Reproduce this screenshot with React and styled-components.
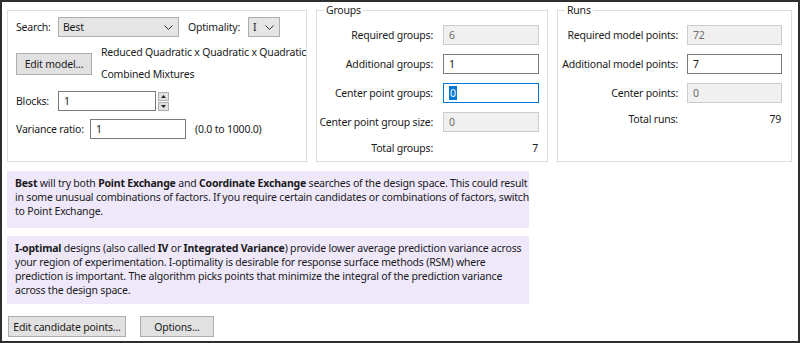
import React from 'react';
import styled, { createGlobalStyle } from 'styled-components';

const Global = createGlobalStyle`
  html, body { margin: 0; padding: 0; background: #fff; }
  * { box-sizing: border-box; }
`;

const FONT = `"Noto Sans", "Open Sans", sans-serif`;

const Frame = styled.div`
  width: 800px;
  height: 343px;
  border: 2px solid #2e2e2e;
  padding: 8px 7px 0 5px;
  font-family: ${FONT};
  font-size: 10.5px;
  letter-spacing: -0.2px;
  color: #1a1a1a;
  background: #fff;
  overflow: hidden;
`;

const TopRow = styled.div`
  display: grid;
  grid-template-columns: 300px 232px 235px;
  column-gap: 9px;
`;

const Panel = styled.div`
  position: relative;
  height: 152px;
  border: 1px solid #dcdcdc;
  box-shadow: inset 1px 1px 0 #fff, 1px 1px 0 #fff;
  padding: ${p => p.$pad || '14px 0 0 0'};
`;

const Caption = styled.span`
  position: absolute;
  top: -9px;
  left: 7px;
  padding: 0 2px;
  background: #fff;
  line-height: 16px;
`;

const Row = styled.div`
  display: flex;
  align-items: ${p => p.$align || 'center'};
  margin-top: ${p => p.$mt || 0}px;
`;

const Label = styled.span`
  width: ${p => p.$w}px;
  margin-left: ${p => p.$ml || 0}px;
  flex-shrink: 0;
  white-space: nowrap;
`;

const Select = styled.div`
  width: ${p => p.$w}px;
  height: 20px;
  border: 1px solid #adadad;
  background: #e5e5e5;
  display: flex;
  align-items: center;
  justify-content: space-between;
  padding: 0 5px 0 4px;
  svg { display: block; }
`;

const Button = styled.div`
  width: ${p => p.$w}px;
  height: ${p => p.$h || 21}px;
  margin-top: ${p => p.$mt || 0}px;
  margin-left: ${p => p.$ml || 0}px;
  border: 1px solid #adadad;
  background: #e1e1e1;
  display: flex;
  align-items: center;
  justify-content: center;
  white-space: nowrap;
  flex-shrink: 0;
`;

const ModelText = styled.div`
  margin-left: 9px;
  line-height: 22px;
  white-space: nowrap;
`;

const Input = styled.div`
  width: ${p => p.$w || 96}px;
  height: 20px;
  border: 1px solid ${p => (p.$focus ? '#0078d7' : p.$disabled ? '#cccccc' : '#7a7a7a')};
  background: ${p => (p.$disabled ? '#f0f0f0' : '#fff')};
  color: ${p => (p.$disabled ? '#6d6d6d' : '#1a1a1a')};
  display: flex;
  align-items: center;
  padding-left: 5px;
  flex-shrink: 0;
`;

const Selected = styled.span`
  background: #0078d7;
  color: #fff;
  line-height: 14px;
  padding: 0 1px;
`;

const Spin = styled.div`
  display: flex;
  flex-direction: column;
  gap: 1px;
  margin-left: 2px;
`;

const SpinBtn = styled.div`
  width: 11px;
  height: 9px;
  border: 1px solid #adadad;
  background: #e1e1e1;
  display: flex;
  align-items: center;
  justify-content: center;
  svg { display: block; }
`;

const Note = styled.span`
  margin-left: 9px;
  white-space: nowrap;
`;

const FieldGrid = styled.div`
  display: grid;
  grid-template-columns: ${p => p.$label}px ${p => p.$input}px;
  column-gap: ${p => p.$gap}px;
  grid-auto-rows: 20px;
  row-gap: 9px;
  align-items: center;
`;

const FieldLabel = styled.span`
  text-align: right;
  white-space: nowrap;
`;

const TotalLabel = styled(FieldLabel)`
  align-self: start;
  line-height: 14px;
`;

const TotalValue = styled.span`
  text-align: right;
  padding-right: 1px;
  align-self: start;
  line-height: 14px;
`;

const Info = styled.div`
  width: 522px;
  height: ${p => p.$h}px;
  margin-top: ${p => p.$mt}px;
  background: #eee8fa;
  padding: 5px 8px;
  line-height: 14px;
  white-space: nowrap;
  b { font-weight: 700; }
`;

const Footer = styled.div`
  display: flex;
  margin-top: 12px;
`;

const Chevron = () => (
  <svg width="9" height="5" viewBox="0 0 9 5">
    <path d="M0.5 0.5 L4.5 4.5 L8.5 0.5" fill="none" stroke="#333" strokeWidth="1" />
  </svg>
);

const Arrow = ({ down }) => (
  <svg width="5" height="3" viewBox="0 0 5 3">
    <path d={down ? 'M0 0 H5 L2.5 3 Z' : 'M0 3 H5 L2.5 0 Z'} fill="#222" />
  </svg>
);

function TotalRow({ label, value }) {
  return (
    <>
      <TotalLabel>{label}</TotalLabel>
      <TotalValue>{value}</TotalValue>
    </>
  );
}

export default function App() {
  return (
    <Frame>
      <Global />
      <TopRow>
        <Panel $pad="6px 0 0 8px">
          <Row>
            <Label $w={42}>Search:</Label>
            <Select $w={121}>
              <span>Best</span>
              <Chevron />
            </Select>
            <Label $w={60} $ml={9}>Optimality:</Label>
            <Select $w={32}>
              <span>I</span>
              <Chevron />
            </Select>
          </Row>
          <Row $align="flex-start" $mt={4}>
            <Button $w={76} $h={22} $mt={12}>Edit model...</Button>
            <ModelText>
              Reduced Quadratic x Quadratic x Quadratic
              <br />
              Combined Mixtures
            </ModelText>
          </Row>
          <Row $mt={6}>
            <Label $w={42}>Blocks:</Label>
            <Input $w={98}>1</Input>
            <Spin>
              <SpinBtn><Arrow /></SpinBtn>
              <SpinBtn><Arrow down /></SpinBtn>
            </Spin>
          </Row>
          <Row $mt={8}>
            <Label $w={74}>Variance ratio:</Label>
            <Input $w={96}>1</Input>
            <Note>(0.0 to 1000.0)</Note>
          </Row>
        </Panel>

        <Panel>
          <Caption>Groups</Caption>
          <FieldGrid $label={116} $input={96} $gap={10}>
            <FieldLabel>Required groups:</FieldLabel>
            <Input $disabled>6</Input>
            <FieldLabel>Additional groups:</FieldLabel>
            <Input>1</Input>
            <FieldLabel>Center point groups:</FieldLabel>
            <Input $focus><Selected>0</Selected></Input>
            <FieldLabel>Center point group size:</FieldLabel>
            <Input $disabled>0</Input>
            <TotalRow label="Total groups:" value="7" />
          </FieldGrid>
        </Panel>

        <Panel>
          <Caption>Runs</Caption>
          <FieldGrid $label={120} $input={95} $gap={9}>
            <FieldLabel>Required model points:</FieldLabel>
            <Input $w={95} $disabled>72</Input>
            <FieldLabel>Additional model points:</FieldLabel>
            <Input $w={95}>7</Input>
            <FieldLabel>Center points:</FieldLabel>
            <Input $w={95} $disabled>0</Input>
            <TotalRow label="Total runs:" value="79" />
          </FieldGrid>
        </Panel>
      </TopRow>

      <Info $h={57} $mt={9}>
        <b>Best</b> will try both <b>Point Exchange</b> and <b>Coordinate Exchange</b> searches of the design space. This could result
        <br />
        in some unusual combinations of factors. If you require certain candidates or combinations of factors, switch
        <br />
        to Point Exchange.
      </Info>
      <Info $h={68} $mt={8}>
        <b>I-optimal</b> designs (also called <b>IV</b> or <b>Integrated Variance</b>) provide lower average prediction variance across
        <br />
        your region of experimentation. I-optimality is desirable for response surface methods (RSM) where
        <br />
        prediction is important. The algorithm picks points that minimize the integral of the prediction variance
        <br />
        across the design space.
      </Info>

      <Footer>
        <Button $w={118} $ml={1}>Edit candidate points...</Button>
        <Button $w={74} $ml={14}>Options...</Button>
      </Footer>
    </Frame>
  );
}
